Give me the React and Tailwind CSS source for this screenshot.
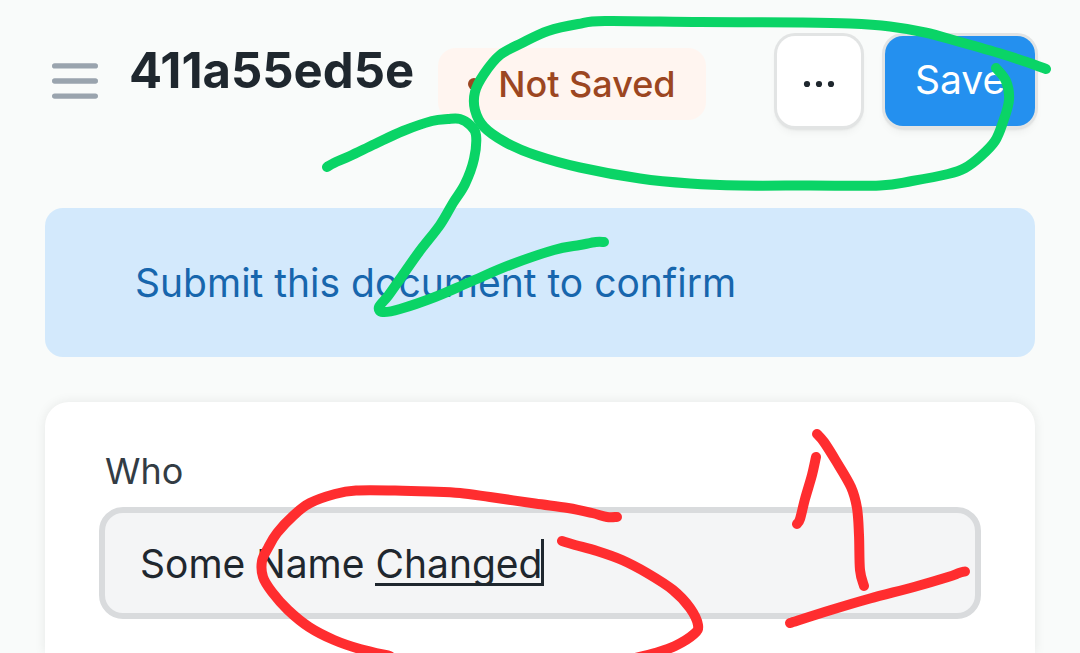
import React from "react";

const GREEN_STROKES = [
  [
    [1046, 69], [1028, 62.5], [1002, 54], [960, 42], [925, 32.5], [890, 26.5], [850, 23.5], [800, 22.5], [700, 22], [605, 21],
    [578, 24], [548, 31], [522, 43], [500, 55], [484, 74], [475, 92], [475, 110], [484, 127], [505, 142], [535, 155],
    [580, 167.5], [640, 178.5], [690, 183.5], [740, 185.5], [810, 185.5], [880, 185.5], [912, 181], [948, 174], [965, 168],
    [981, 156], [995, 141], [1003, 122], [1009, 100], [1006, 81], [996, 68],
  ],
  [
    [327, 167], [334, 163], [350, 156], [375, 144], [403, 131], [432, 121], [448, 119], [460, 119], [470, 125], [476, 135],
    [474, 159], [465, 184], [453, 203], [440, 225], [419, 252], [400, 279], [388, 296], [379, 307], [383, 312], [400, 309],
    [435, 297], [470, 282], [510, 265], [554, 250], [580, 245], [596, 242], [604, 242],
  ],
];

const RED_STROKES = [
  [
    [617, 517], [607, 517], [592, 513], [568, 508], [535, 503.5], [490, 497], [460, 493], [430, 491.5], [395, 490.5],
    [356, 490.5], [335, 494], [310, 503], [294, 515], [277, 533], [268, 548], [262, 561], [263, 577], [272, 592],
    [288, 610], [309, 627], [334, 640], [360, 649], [390, 656],
  ],
  [
    [562, 541], [575, 545], [597, 551], [622, 560], [647, 573], [673, 590], [690, 608], [698, 625], [694, 634],
    [675, 646], [655, 653], [635, 658],
  ],
  [[797, 524], [800, 519], [805, 499], [812, 475], [816, 457]],
  [[817, 434], [824, 442], [836, 461], [851, 487], [857, 508], [859, 535], [860, 570], [864, 586]],
  [[790, 623], [831, 610], [870, 598.5], [914, 587], [948, 577], [959, 573], [965, 571.5]],
];

// Catmull-Rom spline through the pen samples.
function smooth(points) {
  let d = `M${points[0][0]} ${points[0][1]}`;
  for (let i = 0; i < points.length - 1; i++) {
    const p0 = points[i - 1] || points[i];
    const p1 = points[i];
    const p2 = points[i + 1];
    const p3 = points[i + 2] || p2;
    const a = [p1[0] + (p2[0] - p0[0]) / 6, p1[1] + (p2[1] - p0[1]) / 6];
    const b = [p2[0] - (p3[0] - p1[0]) / 6, p2[1] - (p3[1] - p1[1]) / 6];
    d += `C${a[0]} ${a[1]} ${b[0]} ${b[1]} ${p2[0]} ${p2[1]}`;
  }
  return d;
}

function MenuIcon() {
  return (
    <svg viewBox="0 0 60 60" className="size-[60px]" fill="none" stroke="#9aa4ae" strokeWidth="5.4" strokeLinecap="round" aria-hidden="true">
      <path d="M9.7 14.9H50.3M9.7 30H50.3M9.7 45.100H50.3" />
    </svg>
  );
}

function DotsIcon() {
  return (
    <svg viewBox="0 0 36 18" className="h-[18px] w-9" fill="#1f272e" aria-hidden="true">
      <circle cx="6" cy="12" r="3.1" />
      <circle cx="18" cy="12" r="3.1" />
      <circle cx="30" cy="12" r="3.1" />
    </svg>
  );
}

function Header() {
  return (
    <header className="flex items-start">
      <button type="button" aria-label="Menu" className="mt-[15px] shrink-0">
        <MenuIcon />
      </button>
      <h1 className="ml-6 text-[49px] leading-[70px] font-bold text-[#1f272e]">411a55ed5e</h1>
      <div className="mt-3 ml-6 flex h-[72px] items-center gap-[18px] rounded-[18px] bg-[#fff5f0] px-[30px] text-4xl font-medium whitespace-nowrap text-[#9c4621]">
        <span className="size-3 rounded-full bg-[#9c4621]" />
        Not Saved
      </div>
      <div className="ml-auto flex gap-6">
        <button
          type="button"
          aria-label="More actions"
          className="flex h-[90px] w-[84px] items-center justify-center rounded-[18px] bg-white shadow-[0_0_0_3px_#e2e4e4,0_2px_3px_1px_#00000024,0_6px_9px_#0000000d]"
        >
          <DotsIcon />
        </button>
        <button
          type="button"
          className="h-[90px] w-[150px] rounded-[18px] bg-[#2490ef] pb-[2px] text-[39px] leading-[88px] text-white shadow-[0_0_0_3px_#e2e4e4,0_2px_3px_1px_#00000024,0_6px_9px_#0000000d]"
        >
          Save
        </button>
      </div>
    </header>
  );
}

function Annotations() {
  return (
    <svg viewBox="0 0 1080 653" className="pointer-events-none absolute top-0 left-0 w-full" fill="none" strokeWidth="10" strokeLinecap="round" strokeLinejoin="round" aria-hidden="true">
      <g stroke="#0ad466">
        {GREEN_STROKES.map((points, i) => (
          <path key={i} d={smooth(points)} />
        ))}
      </g>
      <g stroke="#ff2d2f">
        {RED_STROKES.map((points, i) => (
          <path key={i} d={smooth(points)} />
        ))}
      </g>
    </svg>
  );
}

export default function App() {
  return (
    <div className="relative flex min-h-screen flex-col overflow-hidden bg-[#f9fbfa] px-[45px] pt-9 font-['Inter',sans-serif]">
      <Header />

      <div role="status" className="mt-[82px] rounded-[18px] bg-[#d3e9fc] px-[90px] py-[45px] text-[39px] leading-[59px] text-[#1766ad]">
        Submit this document to confirm
      </div>

      <main className="mt-[45px] flex grow flex-col rounded-t-[24px] bg-white px-[54px] pt-12 pb-8 shadow-[0_0_12px_#00000014]">
        <label htmlFor="who" className="px-[6px] text-4xl leading-[42px] text-[#333c44]">
          Who
        </label>
        <div className="relative mt-[15px]">
          <input
            id="who"
            type="text"
            defaultValue="Some Name Changed"
            className="h-[112px] w-full rounded-[24px] border-[6px] border-[#d9dbdd] bg-[#f4f5f6] px-[35px] text-[39px] text-[#1f272e] outline-none"
          />
          <span className="pointer-events-none absolute top-8 left-[276px] h-[47px] w-[169px] border-r-[3px] border-b-[3px] border-[#1f272e]" />
        </div>
      </main>

      <Annotations />
    </div>
  );
}
